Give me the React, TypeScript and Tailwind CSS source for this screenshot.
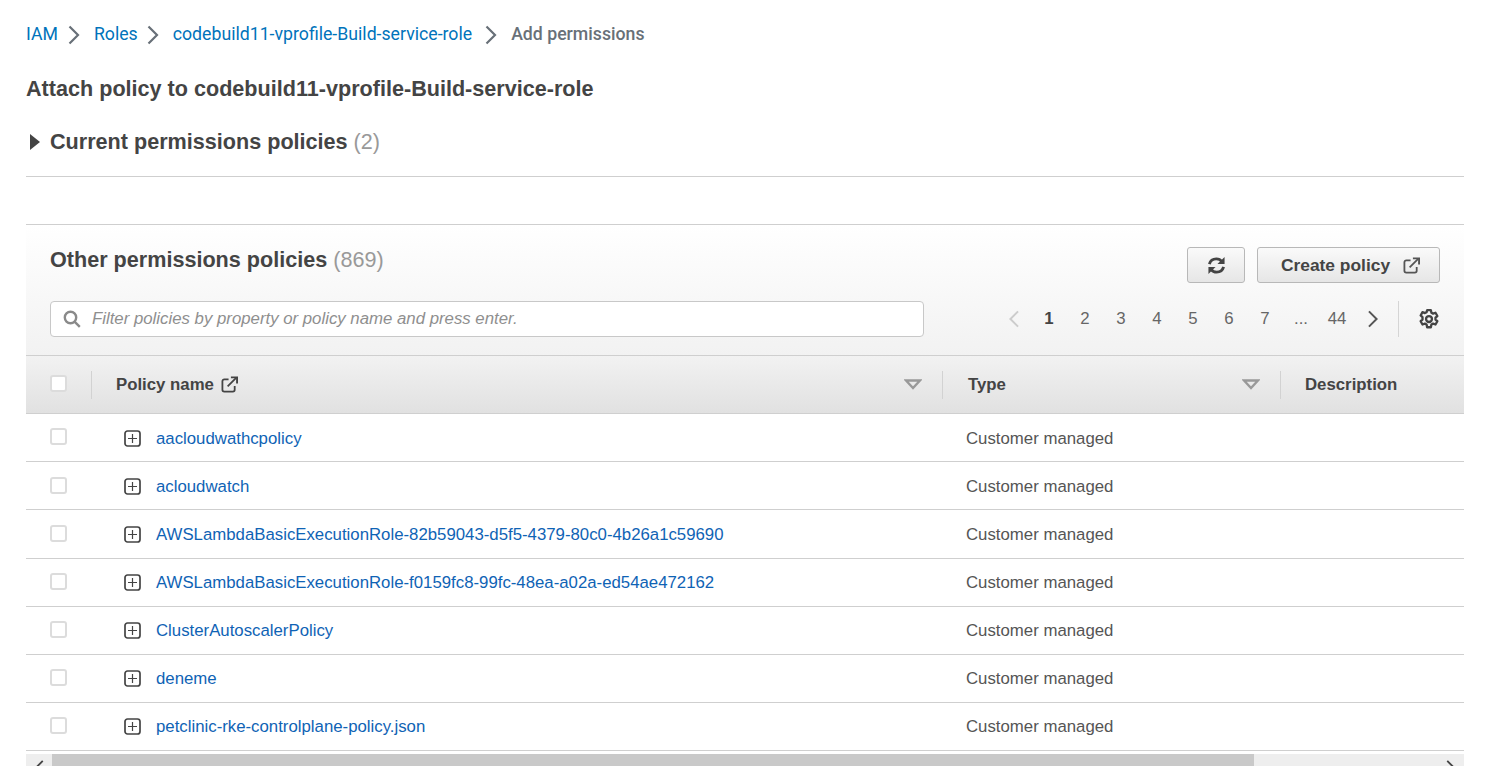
const policies = [
  { name: 'aacloudwathcpolicy', box: 'mt-[-3px]', pad: 'pt-[1.5px]' },
  { name: 'acloudwatch', box: 'mt-[-1px]', pad: 'pt-[1.5px]' },
  { name: 'AWSLambdaBasicExecutionRole-82b59043-d5f5-4379-80c0-4b26a1c59690', box: 'mt-0', pad: 'pt-[1.5px]' },
  { name: 'AWSLambdaBasicExecutionRole-f0159fc8-99fc-48ea-a02a-ed54ae472162', box: 'mt-[-2px]', pad: 'pt-[1.5px]' },
  { name: 'ClusterAutoscalerPolicy', box: 'mt-[-2px]', pad: 'pt-0' },
  { name: 'deneme', box: 'mt-[-2px]', pad: 'pt-0' },
  { name: 'petclinic-rke-controlplane-policy.json', box: 'mt-[-2px]', pad: 'pt-0' },
];

const pages = ['2', '3', '4', '5', '6', '7', '...', '44'];

function Chevron({ left, className }: { left?: boolean; className: string }) {
  return (
    <svg viewBox="0 0 12 20" className={className} fill="none" stroke="currentColor" strokeWidth="2.2">
      <path d={left ? 'M10.5 1.5 2 10l8.5 8.5' : 'M1.5 1.5 10 10l-8.5 8.5'} />
    </svg>
  );
}

function SortCaret() {
  return (
    <svg viewBox="0 0 18 11" className="h-[11px] w-[18px] text-[#999]" fill="none" stroke="currentColor" strokeWidth="2.4">
      <path d="M2 1.500h14L9 9z" />
    </svg>
  );
}

function LinkOut({ className }: { className: string }) {
  return (
    <svg viewBox="0 0 18 18" className={className} fill="none" stroke="currentColor" strokeWidth="1.9">
      <path d="M8 3.500H3.500a2 2 0 0 0-2 2v9a2 2 0 0 0 2 2h9a2 2 0 0 0 2-2V10.500" />
      <path d="M7 11 16 2" />
      <path d="M10.500 1.500h6.500V8" strokeWidth="2" />
    </svg>
  );
}

function Checkbox({ className }: { className?: string }) {
  return <div className={`h-[17px] w-[17px] rounded-[3px] border-2 border-[#dcdcdc] bg-white ${className ?? ''}`} />;
}

function PlusBox() {
  return (
    <svg viewBox="0 0 17 17" className="h-[17px] w-[17px] text-[#444]" fill="none" stroke="currentColor">
      <rect x="1" y="1" width="15" height="15" rx="2.500" strokeWidth="1.700" />
      <path d="M8.500 4v9M4 8.500h9" strokeWidth="1.200" />
    </svg>
  );
}

function Gear() {
  return (
    <svg viewBox="0 0 20 20" className="h-[22px] w-[22px] text-[#444]" fill="none" stroke="currentColor" strokeWidth="2.100" strokeLinejoin="round">
      <path d="M8.300 2h3.400l.5 2.300 1.500.8 2.200-.8 1.700 3-1.700 1.500v1.700l1.700 1.500-1.700 3-2.200-.8-1.500.8-.5 2.500H8.300l-.5-2.500-1.500-.8-2.200.8-1.700-3 1.700-1.500V8.300l-1.700-1.500 1.700-3 2.200.8 1.500-.8z" />
      <circle cx="10" cy="10" r="2.700" />
    </svg>
  );
}

function Refresh() {
  return (
    <svg viewBox="0 0 20 20" className="h-[19px] w-[19px] text-[#444]" fill="none" stroke="currentColor" strokeWidth="3">
      <path d="M2.500 8.500C3.500 5 6.300 3 9.800 3c2.500 0 4.500 1 6 3" />
      <path d="M17.500 11.500C16.500 15 13.700 17 10.200 17c-2.500 0-4.500-1-6-3" />
      <path d="M18.500 1v7.500H11z" fill="currentColor" strokeWidth="0" />
      <path d="M1.500 19v-7.500H9z" fill="currentColor" strokeWidth="0" />
    </svg>
  );
}

export default function App() {
  return (
    <div className="h-[766px] overflow-hidden bg-white pl-[26px] pr-[43px] font-['Liberation_Sans',Arial,sans-serif] text-[#444]">
      {/* breadcrumb */}
      <nav className="flex h-[68px] items-center pt-[1px] font-['Roboto',sans-serif] text-[17.700px] text-[#0073bb]">
        <span>IAM</span>
        <Chevron className="ml-[10px] mr-[14px] h-[20px] w-[12px] text-[#687078]" />
        <span>Roles</span>
        <Chevron className="ml-[9px] mr-[14px] h-[20px] w-[12px] text-[#687078]" />
        <span>codebuild11-vprofile-Build-service-role</span>
        <Chevron className="ml-[13px] mr-[14px] h-[20px] w-[12px] text-[#687078]" />
        <span className="font-medium text-[#687078]">Add permissions</span>
      </nav>

      <h1 className="flex h-[40px] items-center pt-[2px] text-[21.600px] font-bold">Attach policy to codebuild11-vprofile-Build-service-role</h1>

      <div className="mt-[13px] flex h-[40px] items-center pt-[2px] text-[21.600px]">
        <svg viewBox="0 0 10 16" className="ml-[4px] mr-[10px] h-[16px] w-[10px] text-[#444]" fill="currentColor">
          <path d="M0 0l10 8-10 8z" />
        </svg>
        <span className="font-bold">Current permissions policies</span>
        <span className="ml-[6px] text-[#999]">(2)</span>
      </div>
      <div className="mt-[15px] h-px bg-[#cfcfcf]" />

      {/* policies panel */}
      <section className="mt-[47px]">
        <div className="h-[132px] border-t border-b border-[#cfcfcf] bg-gradient-to-b from-white to-[#f2f2f2] px-[24px]">
          <div className="flex items-start justify-between">
            <h2 className="mt-[20px] text-[21.600px] leading-[30px]">
              <span className="font-bold">Other permissions policies</span>
              <span className="ml-[6px] text-[#999]">(869)</span>
            </h2>
            <div className="mt-[22px] flex gap-[12px]">
              <button className="flex h-[36px] w-[58px] items-center justify-center rounded-[3px] border border-[#b8b8b8] bg-gradient-to-b from-[#fafafa] to-[#e6e6e6]">
                <Refresh />
              </button>
              <button className="flex h-[36px] w-[183px] items-center justify-center gap-[13px] rounded-[3px] border border-[#b8b8b8] bg-gradient-to-b from-[#fafafa] to-[#e6e6e6] pl-[4px] pt-[1px] text-[17.400px] font-bold">
                Create policy
                <LinkOut className="h-[17px] w-[17px] text-[#555]" />
              </button>
            </div>
          </div>
          <div className="mt-[18px] flex items-center justify-between">
            <div className="flex h-[36px] w-[874px] items-center rounded-[4px] border border-[#c8c8c8] bg-white pl-[12px]">
              <svg viewBox="0 0 18 18" className="mr-[11px] h-[18px] w-[18px] text-[#8a8a8a]" fill="none" stroke="currentColor" strokeWidth="2.400">
                <circle cx="7.500" cy="7.500" r="5.700" />
                <path d="m11.800 11.800 5 5" />
              </svg>
              <span className="text-[16.800px] italic text-[#8f8f8f]">Filter policies by property or policy name and press enter.</span>
            </div>
            <div className="flex h-[36px] items-center text-[16.800px] text-[#666]">
              <Chevron left className="mr-[11px] h-[18px] w-[12px] text-[#ccc]" />
              <span className="w-[36px] text-center font-bold text-[#444]">1</span>
              {pages.map((p) => (
                <span key={p} className="w-[36px] text-center">
                  {p}
                </span>
              ))}
              <Chevron className="ml-[12px] h-[18px] w-[12px] text-[#555]" />
              <div className="ml-[19px] h-[36px] w-px bg-[#d5d5d5]" />
              <div className="ml-[19px]">
                <Gear />
              </div>
            </div>
          </div>
        </div>

        {/* table head */}
        <div className="flex h-[58px] items-center border-b border-[#cfcfcf] bg-gradient-to-b from-[#f2f2f2] to-[#e1e1e1] text-[16.800px] font-bold">
          <div className="flex h-[28px] w-[66px] items-center border-r border-[#d2d2d2] pl-[24px]">
            <Checkbox className="mt-[-2px]" />
          </div>
          <div className="flex h-[28px] w-[851px] items-center justify-between border-r border-[#d2d2d2] pl-[24px] pr-[20px]">
            <span className="flex items-center gap-[7px]">
              Policy name
              <LinkOut className="h-[17px] w-[17px] text-[#444]" />
            </span>
            <SortCaret />
          </div>
          <div className="flex h-[28px] w-[338px] items-center justify-between border-r border-[#d2d2d2] pl-[25px] pr-[20px]">
            <span>Type</span>
            <SortCaret />
          </div>
          <span className="pl-[24px]">Description</span>
        </div>

        {/* rows */}
        {policies.map((p) => (
          <div key={p.name} className="flex h-[48.200px] items-center border-b border-[#cfcfcf] text-[16.800px]">
            <div className="w-[90px] pl-[24px]">
              <Checkbox className={p.box} />
            </div>
            <div className={`flex w-[850px] items-center ${p.pad}`}>
              <div className="ml-[8px] mr-[15px]">
                <PlusBox />
              </div>
              <span className="text-[#0f63b5]">{p.name}</span>
            </div>
            <span className={`text-[#555] ${p.pad}`}>Customer managed</span>
          </div>
        ))}

        {/* horizontal scrollbar */}
        <div className="mt-[3px] flex h-[12px] items-start overflow-hidden bg-[#eeeeee]">
          <div className="flex h-[12px] w-[26px] justify-center pt-[5px]">
            <Chevron left className="h-[18px] w-[10px] text-[#444]" />
          </div>
          <div className="h-[12px] w-[1202px] bg-[#c9c9c9]" />
          <div className="ml-auto flex h-[12px] w-[26px] justify-center pt-[5px]">
            <Chevron className="h-[18px] w-[10px] text-[#444]" />
          </div>
        </div>
      </section>
    </div>
  );
}
